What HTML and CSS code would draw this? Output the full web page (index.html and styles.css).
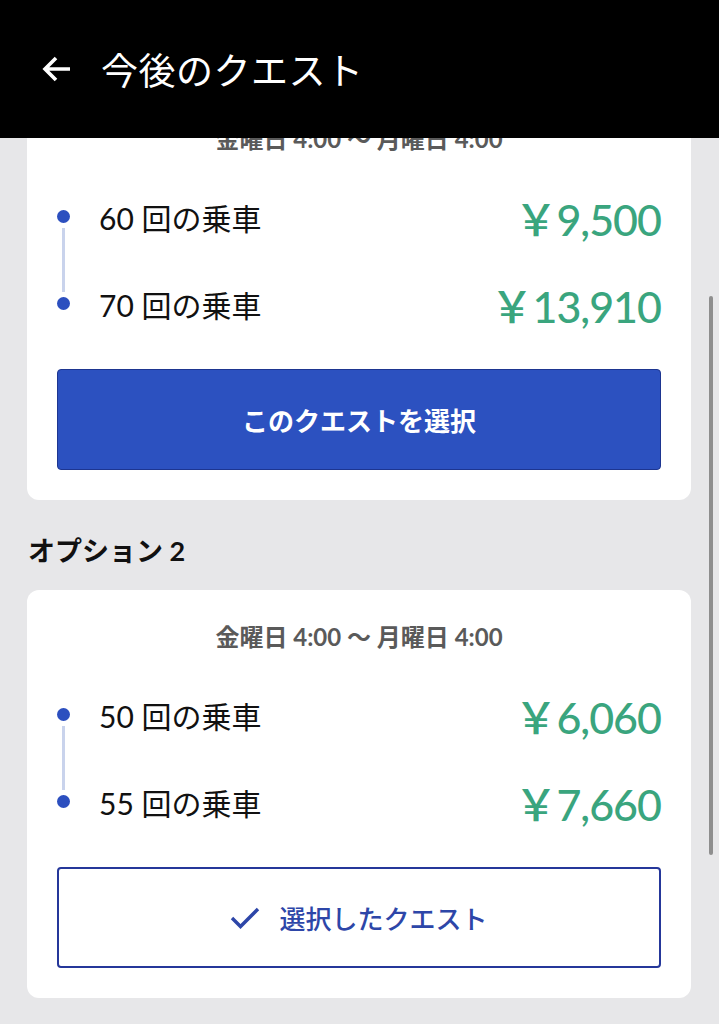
FILE: index.html
```html
<!doctype html>
<html lang="ja">
<head>
	<meta charset="utf-8">
	<title>今後のクエスト</title>
	<link rel="stylesheet" href="styles.css">
</head>
<body>
	<div class="topbar">
		<svg class="back" width="30" height="26" viewBox="0 0 30 26">
			<path d="M28 13H4M14 2L3 13l11 11" fill="none" stroke="#fff" stroke-width="3.6" stroke-linejoin="miter"/>
		</svg>
		<span class="title">今後のクエスト</span>
	</div>
	<div class="scrollbar"></div>

	<div class="list">
		<div class="card">
			<p class="date">金曜日 4:00 〜 月曜日 4:00</p>
			<div class="tiers">
				<div class="tier first">
					<span class="dot"></span>
					<span class="rides">60 回の乗車</span>
					<span class="price">￥9,500</span>
				</div>
				<div class="tier">
					<span class="dot"></span>
					<span class="rides">70 回の乗車</span>
					<span class="price">￥13,910</span>
				</div>
			</div>
			<div class="btn btn-select">このクエストを選択</div>
		</div>

		<p class="option">オプション 2</p>

		<div class="card">
			<p class="date">金曜日 4:00 〜 月曜日 4:00</p>
			<div class="tiers">
				<div class="tier first">
					<span class="dot"></span>
					<span class="rides">50 回の乗車</span>
					<span class="price">￥6,060</span>
				</div>
				<div class="tier">
					<span class="dot"></span>
					<span class="rides">55 回の乗車</span>
					<span class="price">￥7,660</span>
				</div>
			</div>
			<div class="btn btn-selected">
				<svg class="check" width="30" height="22" viewBox="0 0 30 22">
					<path d="M2 11l8.5 8.5L28 2" fill="none" stroke="#2d46a8" stroke-width="3.4"/>
				</svg>
				<span>選択したクエスト</span>
			</div>
		</div>
	</div>
</body>
</html>
```

FILE: styles.css
```css
body
{
	margin:0;
	background-color:#e7e7e9;
	font-family:Lato, "Noto Sans CJK JP", sans-serif;
	color:#111;
}
.topbar
{
	position:fixed;
	top:0;
	left:0;
	right:0;
	height:138px;
	background-color:#000;
	display:flex;
	align-items:center;
	padding-left:42px;
	z-index:2;
}
.back
{
	margin-right:29px;
}
.title
{
	color:#fff;
	font-family:"Noto Sans CJK JP", sans-serif;
	font-size:37px;
	font-weight:400;
	letter-spacing:0.5px;
}
.scrollbar
{
	position:fixed;
	top:296px;
	right:6px;
	width:4px;
	height:559px;
	border-radius:2px;
	background-color:#8e8e8e;
	z-index:3;
}
.list
{
	padding:92px 28px 40px 27px;
}
.card
{
	background-color:#fff;
	border-radius:12px;
	padding:0 30px 30px;
}
.date
{
	margin:0;
	padding-top:32px;
	line-height:30px;
	text-align:center;
	font-size:24px;
	font-weight:700;
	color:#5a5a5a;
}
.tiers
{
	margin-top:33px;
	display:flex;
	flex-direction:column;
	gap:29px;
}
.tier
{
	position:relative;
	height:58px;
	display:flex;
	align-items:center;
}
.dot
{
	width:13px;
	height:13px;
	border-radius:50%;
	background-color:#2c4fbf;
	margin-right:29px;
}
.tier.first::after
{
	content:"";
	position:absolute;
	left:5px;
	top:41px;
	width:3px;
	height:64px;
	background-color:#c9d3ec;
}
.rides
{
	font-size:30px;
	flex:1;
	margin-top:1px;
}
.price
{
	font-size:43px;
	font-weight:500;
	color:#3aa57e;
	letter-spacing:-1px;
	margin-top:2px;
}
.btn
{
	margin-top:37px;
	height:101px;
	box-sizing:border-box;
	border-radius:4px;
	display:flex;
	align-items:center;
	justify-content:center;
	font-family:"Noto Sans CJK JP", sans-serif;
	font-size:26px;
}
.btn-select
{
	background-color:#2c51c0;
	border:1px solid #1d3590;
	color:#fff;
	font-weight:700;
}
.btn-selected
{
	border:2px solid #25379a;
	color:#2d46a8;
	font-weight:500;
}
.check
{
	margin-right:19px;
}
.option
{
	margin:33px 0 21px 1px;
	line-height:36px;
	font-size:27px;
	font-weight:700;
}
```
